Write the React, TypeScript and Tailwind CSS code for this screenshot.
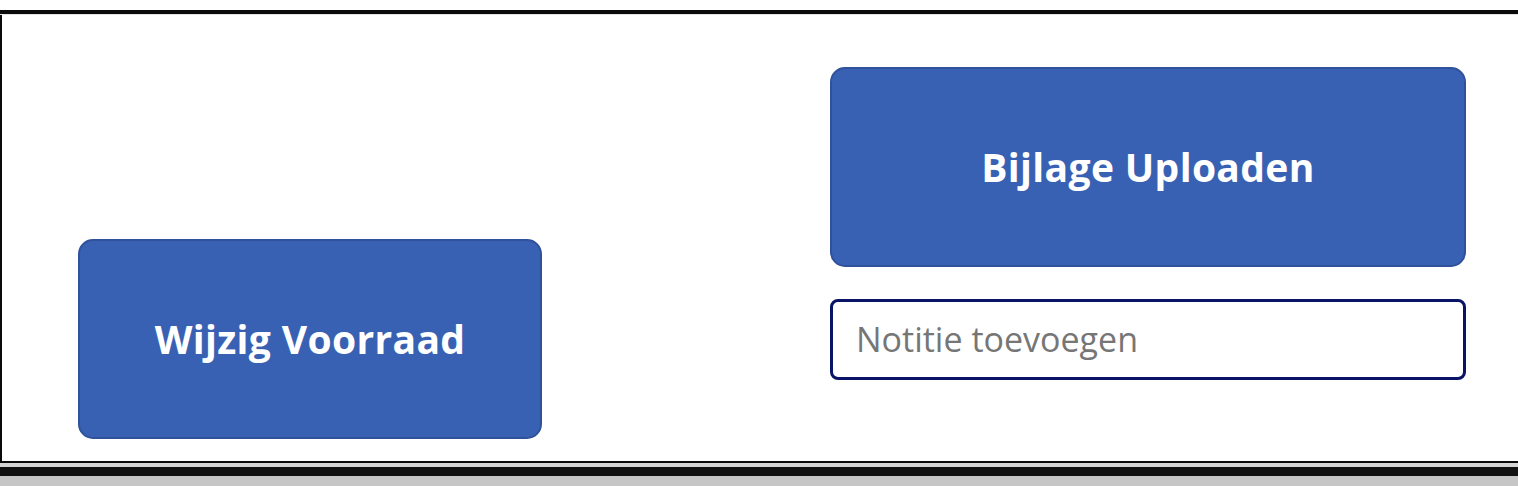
import React from "react";

export default function App() {
  const font = { fontFamily: '"Open Sans", "Noto Sans", sans-serif' };
  return (
    <div className="w-[1518px] h-[486px] bg-white flex flex-col overflow-hidden" style={font}>
      <div className="h-[10px] bg-white shrink-0" />
      <div className="h-[4px] bg-[#0a0a0a] shrink-0" />
      <div className="h-[1px] bg-[#e4e4e4] shrink-0" />
      <div className="h-[446px] shrink-0 flex border-l-[2px] border-[#0a0a0a] bg-white">
        <div className="w-[828px] shrink-0 flex flex-col justify-end pb-[22px] pl-[76px]">
          <button className="w-[464px] h-[200px] rounded-[15px] bg-[#3961b3] border-[2px] border-[#30519b] text-white font-bold text-[39px] tracking-[0.35px] flex items-center justify-center">
            Wijzig Voorraad
          </button>
        </div>
        <div className="flex flex-col pt-[52px] w-[636px]">
          <button className="w-[636px] h-[200px] rounded-[15px] bg-[#3961b3] border-[2px] border-[#30519b] text-white font-bold text-[39px] tracking-[0.35px] flex items-center justify-center">
            Bijlage Uploaden
          </button>
          <div className="mt-[32px] w-[636px] h-[81px] rounded-[8px] border-[3px] border-[#0a1466] bg-white flex items-center pl-[23px]">
            <span className="text-[34px] text-[#767676]">Notitie toevoegen</span>
          </div>
        </div>
      </div>
      <div className="h-[2px] bg-[#0a0a0a] shrink-0" />
      <div className="h-[4px] bg-[#d4d4d4] shrink-0" />
      <div className="h-[9px] bg-[#111111] shrink-0" />
      <div className="flex-1 bg-[#c6c6c6]" />
    </div>
  );
}
